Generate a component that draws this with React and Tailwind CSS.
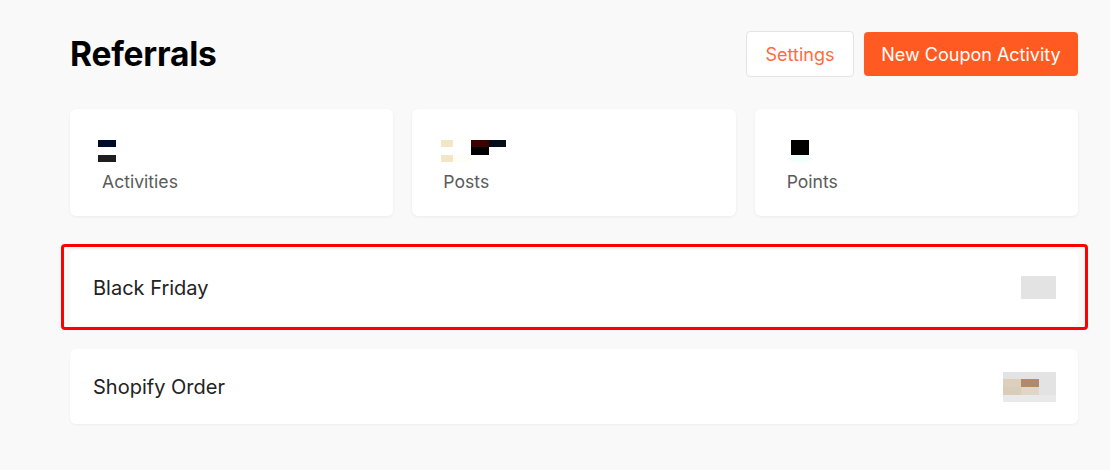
import React from "react";

const font = { fontFamily: "Inter, 'Noto Sans', sans-serif" };

function StatCard({ children, label, labelPad }) {
  return (
    <div className="h-[107px] rounded-md bg-white shadow-[0_1px_3px_rgba(0,0,0,0.06)] pl-[28px] pt-[31px]">
      <div className="h-[22px]">{children}</div>
      <div className={`mt-[8px] text-[17.6px] leading-[24px] text-[#5a5a5a] ${labelPad}`}>{label}</div>
    </div>
  );
}

export default function App() {
  return (
    <div className="min-h-[470px] w-[1110px] bg-[#f9f9f9]" style={font}>
      <div className="w-[1008px] ml-[70px] pt-[31px]">
        <div className="flex items-center justify-between h-[46px]">
          <h1 className="text-[33.5px] font-bold text-black leading-none tracking-[-0.2px] pt-[2px]">Referrals</h1>
          <div className="flex items-center gap-[10px]">
            <button className="h-[46px] w-[108px] rounded border border-[#e4e4e4] bg-white text-[18px] text-[#ff6b3d]">Settings</button>
            <button className="h-[44px] w-[214px] rounded bg-[#ff5a22] text-[18px] text-white">New Coupon Activity</button>
          </div>
        </div>

        <div className="grid grid-cols-3 gap-[19px] mt-[32px]">
          <StatCard label="Activities" labelPad="pl-[4px]">
            <div className="flex flex-col gap-[8px]">
              <div className="w-[18px] h-[7px] bg-[#000a2a]" />
              <div className="w-[18px] h-[7px] bg-[#1e1e1e]" />
            </div>
          </StatCard>
          <StatCard label="Posts" labelPad="pl-[3px]">
            <div className="flex">
              <div className="flex flex-col gap-[8px] pl-[1px]">
                <div className="w-[12px] h-[7px] bg-[#f3e6c6]" />
                <div className="flex">
                  <div className="w-[12px] h-[7px] bg-[#f3e6c6]" />
                  <div className="w-[16px] h-[7px] bg-[#fffef6]" />
                </div>
              </div>
              <div className="ml-[2px] flex flex-col">
                <div className="flex">
                  <div className="w-[18px] h-[7px] bg-[#3d0000]" />
                  <div className="w-[17px] h-[7px] bg-[#050d1a]" />
                </div>
                <div className="w-[18px] h-[8px] bg-black" />
              </div>
            </div>
          </StatCard>
          <StatCard label="Points" labelPad="pl-[4px]">
            <div className="pl-[8px]">
              <div className="w-[18px] h-[15px] bg-black" />
              <div className="w-[18px] h-[7px] bg-[#f0fefe]" />
            </div>
          </StatCard>
        </div>

        <div className="relative mt-[34px]">
          <div className="absolute -left-[9px] -right-[10px] -top-[6px] -bottom-[5px] rounded border-[3px] border-[#ff0000]" />
          <div className="relative h-[75px] rounded-md bg-white flex items-center justify-between pl-[23px] pr-[22px]">
            <span className="text-[20px] text-[#222]">Black Friday</span>
            <div className="w-[35px] h-[23px] bg-[#e3e3e3]" />
          </div>
        </div>

        <div className="mt-[24px] h-[75px] rounded-md bg-white shadow-[0_1px_3px_rgba(0,0,0,0.05)] flex items-center justify-between pl-[23px] pr-[22px]">
          <span className="text-[20px] text-[#222]">Shopify Order</span>
          <div className="w-[53px] flex flex-col">
            <div className="h-[7px] bg-[#e3e3e3]" />
            <div className="flex h-[8px]">
              <div className="w-[18px] bg-[#dccfbd]" />
              <div className="w-[18px] bg-[#b08b66]" />
              <div className="flex-1 bg-[#e3e3e3]" />
            </div>
            <div className="flex h-[8px]">
              <div className="w-[18px] bg-[#d9ccb8]" />
              <div className="w-[18px] bg-[#e0d6c8]" />
              <div className="flex-1 bg-[#e3e3e3]" />
            </div>
            <div className="h-[7px] bg-[#e9e9e9]" />
          </div>
        </div>
      </div>
    </div>
  );
}
